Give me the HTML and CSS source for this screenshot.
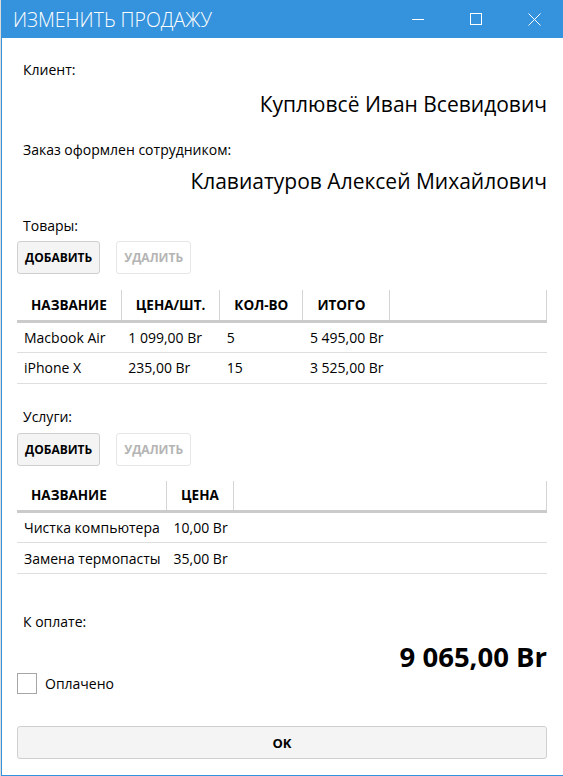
FILE: index.html
```html
<!DOCTYPE html>
<html lang="ru">
<head>
<meta charset="utf-8">
<title>Изменить продажу</title>
<link rel="stylesheet" href="styles.css">
</head>
<body>
<div class="window">
  <header class="titlebar">
    <span class="title">ИЗМЕНИТЬ ПРОДАЖУ</span>
    <div class="caption">
      <span class="cap-btn"><svg width="12" height="12" viewBox="0 0 12 12"><path d="M0 6.5H12" stroke="#fff" stroke-width="1"/></svg></span>
      <span class="cap-btn"><svg width="12" height="12" viewBox="0 0 12 12"><rect x="0.5" y="0.5" width="11" height="11" fill="none" stroke="#fff" stroke-width="1"/></svg></span>
      <span class="cap-btn"><svg width="13" height="13" viewBox="0 0 13 13"><path d="M0.5 0.5L12.5 12.5M12.5 0.5L0.5 12.5" stroke="#fff" stroke-width="1"/></svg></span>
    </div>
  </header>
  <main class="content">
    <div class="label l-client">Клиент:</div>
    <div class="name n-client">Куплювсё Иван Всевидович</div>
    <div class="label l-emp">Заказ оформлен сотрудником:</div>
    <div class="name n-emp">Клавиатуров Алексей Михайлович</div>

    <div class="label l-goods">Товары:</div>
    <div class="btn-row">
      <button class="btn">ДОБАВИТЬ</button>
      <button class="btn" disabled>УДАЛИТЬ</button>
    </div>
    <table class="grid g-goods">
      <thead>
        <tr><th>НАЗВАНИЕ</th><th>ЦЕНА/ШТ.</th><th>КОЛ-ВО</th><th>ИТОГО</th><th class="fill"></th></tr>
      </thead>
      <tbody>
        <tr><td>Macbook Air</td><td>1 099,00 Br</td><td>5</td><td>5 495,00 Br</td><td></td></tr>
        <tr><td>iPhone X</td><td>235,00 Br</td><td>15</td><td>3 525,00 Br</td><td></td></tr>
      </tbody>
    </table>

    <div class="label l-serv">Услуги:</div>
    <div class="btn-row">
      <button class="btn">ДОБАВИТЬ</button>
      <button class="btn" disabled>УДАЛИТЬ</button>
    </div>
    <table class="grid g-serv">
      <thead>
        <tr><th>НАЗВАНИЕ</th><th>ЦЕНА</th><th class="fill"></th></tr>
      </thead>
      <tbody>
        <tr><td>Чистка компьютера</td><td>10,00 Br</td><td></td></tr>
        <tr><td>Замена термопасты</td><td>35,00 Br</td><td></td></tr>
      </tbody>
    </table>

    <div class="label l-pay">К оплате:</div>
    <div class="total">9 065,00 Br</div>
    <label class="check-row"><span class="checkbox"></span><span>Оплачено</span></label>
    <button class="btn btn-ok">OK</button>
  </main>
</div>
</body>
</html>
```

FILE: styles.css
```css
* { box-sizing: border-box; }
html, body { margin: 0; padding: 0; }
body {
  background: #dcdcdc;
  font-family: "Open Sans", "Noto Sans", sans-serif;
  color: #000;
  width: 563px;
  height: 776px;
  overflow: hidden;
}
.window {
  margin-left: 1px;
  height: 776px;
  background: #fff;
  border-left: 1px solid #3592dc;
  border-bottom: 1px solid #3592dc;
  display: flex;
  flex-direction: column;
}
.titlebar {
  height: 38px;
  background: #3592dc;
  display: flex;
  align-items: center;
  padding-left: 11px;
  color: #fff;
}
.title {
  font-size: 19.5px;
  font-weight: 300;
  flex: 1;
}
.caption { display: flex; height: 38px; }
.cap-btn {
  width: 58px;
  display: flex;
  align-items: center;
  justify-content: center;
}
.content {
  padding: 0 15px 0 15px;
  display: flex;
  flex-direction: column;
}
.label {
  font-size: 14px;
  line-height: 20px;
  padding-left: 6px;
}
.name {
  font-size: 21px;
  line-height: 30px;
  text-align: right;
  padding-right: 1px;
}
.l-client { margin-top: 22px; }
.n-client { margin-top: 9px; }
.l-emp { margin-top: 21px; }
.n-emp { margin-top: 6px; }
.l-goods { margin-top: 20px; }
.btn-row {
  display: flex;
  gap: 16px;
  margin-top: 5px;
}
.l-serv + .btn-row { margin-top: 6px; }
.btn {
  height: 33px;
  padding: 0 7px;
  font-family: inherit;
  font-size: 12px;
  font-weight: 700;
  color: #000;
  background: #f4f4f4;
  border: 1px solid #cfcfcf;
  border-radius: 3px;
}
.btn:disabled {
  background: #fff;
  border-color: #e6e6e6;
  color: #b4b4b4;
}
.grid {
  width: 530px;
  border-collapse: collapse;
  font-size: 14px;
}
.g-goods { margin-top: 16px; }
.g-serv { margin-top: 15px; }
.grid th {
  height: 31px;
  padding: 0 14px;
  font-size: 13.5px;
  font-weight: 700;
  text-align: left;
  white-space: nowrap;
  border-right: 1px solid #d4d4d4;
  border-bottom: 3px solid #cbcbcb;
}
.grid th.fill { width: 100%; }
.grid td {
  height: 31px;
  padding: 0 6px 0 7px;
  white-space: nowrap;
  border-bottom: 1px solid #dedede;
}
.l-serv { margin-top: 23px; }
.l-pay { margin-top: 38px; }
.total {
  margin-top: 10px;
  font-size: 27.5px;
  line-height: 30px;
  font-weight: 700;
  text-align: right;
  padding-right: 1px;
}
.check-row {
  display: flex;
  align-items: center;
  gap: 8px;
  margin-top: 1px;
  font-size: 14px;
}
.checkbox {
  width: 20px;
  height: 21px;
  border: 1px solid #a6a6a6;
  background: #fff;
}
.btn-ok {
  margin-top: 32px;
  width: 530px;
  font-size: 13px;
}
```
